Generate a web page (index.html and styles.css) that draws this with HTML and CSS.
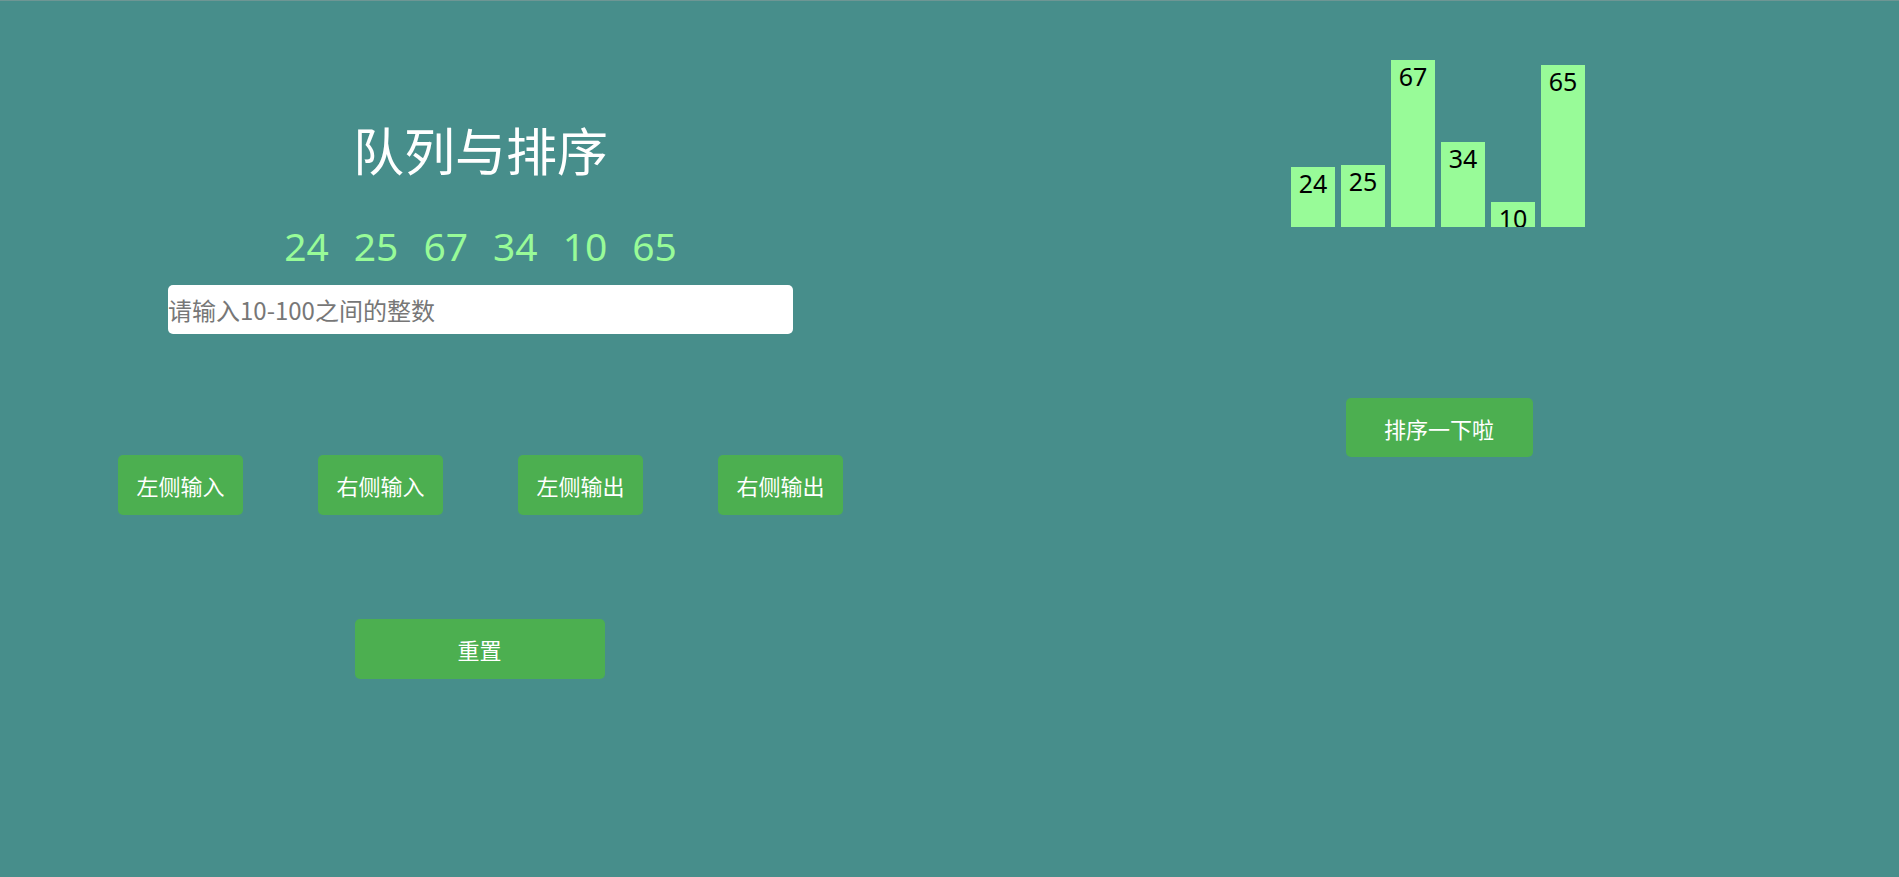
FILE: index.html
```html
<!DOCTYPE html>
<html lang="zh-CN">
<head>
<meta charset="utf-8">
<title>队列与排序</title>
<link rel="stylesheet" href="styles.css">
</head>
<body>
<div class="page">
  <section class="left">
    <h1 class="title">队列与排序</h1>
    <div class="queue">
      <span class="num">24</span>
      <span class="num">25</span>
      <span class="num">67</span>
      <span class="num">34</span>
      <span class="num">10</span>
      <span class="num">65</span>
    </div>
    <input class="field" type="text" placeholder="请输入10-100之间的整数">
    <div class="actions">
      <button class="btn btn-op">左侧输入</button>
      <button class="btn btn-op">右侧输入</button>
      <button class="btn btn-op">左侧输出</button>
      <button class="btn btn-op">右侧输出</button>
    </div>
    <button class="btn btn-reset">重置</button>
  </section>
  <section class="right">
    <div class="chart">
      <div class="bar" style="height:60px">24</div>
      <div class="bar" style="height:62.5px">25</div>
      <div class="bar" style="height:167.5px">67</div>
      <div class="bar" style="height:85px">34</div>
      <div class="bar" style="height:25px">10</div>
      <div class="bar" style="height:162.5px">65</div>
    </div>
    <button class="btn btn-sort">排序一下啦</button>
  </section>
</div>
</body>
</html>
```

FILE: styles.css
```css
html, body {
  margin: 0;
  padding: 0;
}

body {
  background: #478e8b;
  border-top: 1px solid #6e9694;
  height: 876px;
  overflow: hidden;
  font-family: "Noto Sans", "Noto Sans CJK SC", sans-serif;
}

.page {
  display: flex;
  align-items: flex-start;
}

.left {
  width: 961px;
  display: flex;
  flex-direction: column;
  align-items: center;
  padding-top: 124px;
}

.title {
  margin: 0;
  font-family: "Noto Sans CJK SC", sans-serif;
  font-weight: 400;
  font-size: 51px;
  line-height: 49px;
  color: #ffffff;
}

.queue {
  display: flex;
  gap: 25px;
  margin-top: 52px;
  height: 40px;
  align-items: center;
}

.num {
  font-family: "Noto Sans", sans-serif;
  font-size: 39px;
  line-height: 40px;
  color: #98fb98;
}

.field {
  margin-top: 19px;
  width: 625px;
  height: 49px;
  box-sizing: border-box;
  border: none;
  border-radius: 5px;
  padding: 0;
  background: #ffffff;
  font-family: "Noto Sans CJK SC", sans-serif;
  font-size: 24px;
  outline: none;
}

.field::placeholder {
  color: #777777;
}

.actions {
  margin-top: 121px;
  display: flex;
  gap: 75px;
}

.btn {
  border: none;
  border-radius: 5px;
  background: #4caf50;
  color: #ffffff;
  font-family: "Noto Sans CJK SC", sans-serif;
  font-size: 22px;
  padding: 0;
  cursor: pointer;
}

.btn-op {
  width: 125px;
  height: 60px;
}

.btn-reset {
  margin-top: 104px;
  margin-right: 2px;
  width: 250px;
  height: 60px;
}

.right {
  flex: 1;
  display: flex;
  flex-direction: column;
  align-items: center;
  padding-left: 16px;
  padding-top: 46px;
}

.chart {
  display: flex;
  align-items: flex-end;
  gap: 6px;
  height: 180px;
}

.bar {
  width: 44px;
  background: #98fb98;
  overflow: hidden;
  text-align: center;
  font-family: "Noto Sans", sans-serif;
  font-size: 25px;
  line-height: 33px;
  color: #000000;
}

.btn-sort {
  margin-top: 171px;
  margin-left: 2px;
  width: 187px;
  height: 59px;
}
```
